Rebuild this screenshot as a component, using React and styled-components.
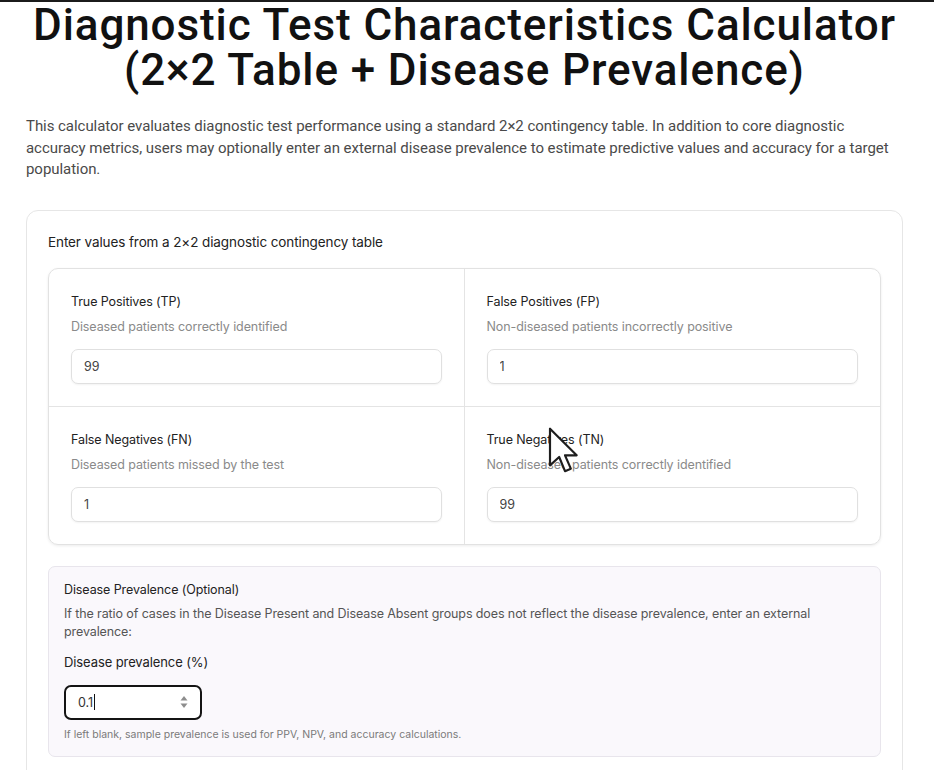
import React from "react";
import styled, { createGlobalStyle } from "styled-components";

const GlobalStyle = createGlobalStyle`
  html, body {
    margin: 0;
    padding: 0;
    background: #ffffff;
  }
  body {
    font-family: Inter, "Noto Sans", sans-serif;
    color: #222;
  }
  * {
    box-sizing: border-box;
  }
`;

const Page = styled.div`
  position: relative;
  width: 934px;
  height: 770px;
  overflow: hidden;
  padding: 0 31px 0 26px;
  border-top: 2px solid #1b1b1b;
`;

const Title = styled.h1`
  margin: 1px -20px 0;
  font-family: Roboto, "Liberation Sans", sans-serif;
  font-weight: 500;
  font-size: 44px;
  line-height: 45px;
  letter-spacing: 0.9px;
  white-space: nowrap;
  text-align: center;
  color: #111;
`;

const Intro = styled.p`
  margin: 23px 0 0;
  font-family: Roboto, "Liberation Sans", sans-serif;
  font-size: 15px;
  line-height: 21.5px;
  letter-spacing: -0.05px;
  color: #4a4a4a;
`;

const Card = styled.section`
  margin-top: 29px;
  border: 1px solid #e6e6e6;
  border-radius: 12px;
  padding: 22px 21px 30px;
  background: #fff;
`;

const CardHeading = styled.div`
  font-size: 13.5px;
  line-height: 18px;
  letter-spacing: -0.1px;
  color: #222;
  margin-bottom: 17px;
`;

const TableGrid = styled.div`
  display: grid;
  grid-template-columns: 1fr 1fr;
  border: 1px solid #e2e2e2;
  border-radius: 10px;
  overflow: hidden;
  box-shadow: 0 1px 3px rgba(0, 0, 0, 0.08);
`;

const Cell = styled.div`
  padding: 24px 22px 22px;
  border-right: ${(p) => (p.$left ? "1px solid #e4e4e4" : "none")};
  border-bottom: ${(p) => (p.$top ? "1px solid #e4e4e4" : "none")};
`;

const Label = styled.div`
  font-size: 12.5px;
  line-height: 18px;
  letter-spacing: -0.1px;
  color: #222;
`;

const Hint = styled.div`
  margin-top: 7px;
  font-size: 12.5px;
  line-height: 18px;
  letter-spacing: -0.1px;
  color: #8a8a8a;
`;

const Field = styled.input`
  display: block;
  width: 100%;
  height: 35px;
  margin-top: 13px;
  padding: 0 12px;
  border: 1px solid #e0e0e0;
  border-radius: 7px;
  box-shadow: 0 1px 2px rgba(0, 0, 0, 0.05);
  font-family: Inter, sans-serif;
  font-size: 12.5px;
  color: #444;
  background: #fff;
  outline: none;
`;

const PrevalenceBox = styled.div`
  margin-top: 21px;
  background: #faf8fc;
  border: 1px solid #e8e5ec;
  border-radius: 7px;
  padding: 14px 15px 14px;
`;

const BoxTitle = styled.div`
  font-size: 12.5px;
  line-height: 18px;
  letter-spacing: -0.1px;
  color: #222;
`;

const BoxText = styled.p`
  margin: 6px 0 0;
  font-size: 12.5px;
  line-height: 18px;
  letter-spacing: -0.1px;
  color: #555;
`;

const FieldLabel = styled.div`
  margin-top: 12px;
  font-size: 13px;
  line-height: 18px;
  letter-spacing: -0.1px;
  color: #222;
`;

const NumberField = styled.div`
  position: relative;
  display: flex;
  align-items: center;
  width: 138px;
  height: 35px;
  margin-top: 14px;
  padding: 0 12px;
  border: 2px solid #141414;
  border-radius: 7px;
  background: #fff;
  font-size: 12.5px;
  color: #333;
`;

const Caret = styled.span`
  display: inline-block;
  width: 1px;
  height: 16px;
  margin-left: 1px;
  background: #111;
`;

const Spinner = styled.svg`
  position: absolute;
  right: 12px;
  top: 50%;
  transform: translateY(-50%);
`;

const Small = styled.div`
  margin-top: 8px;
  font-size: 10.5px;
  line-height: 14px;
  color: #7a7a7a;
`;

const Pointer = styled.svg`
  position: absolute;
  left: 548px;
  top: 425px;
  pointer-events: none;
`;

const cells = [
  { label: "True Positives (TP)", hint: "Diseased patients correctly identified", value: "99" },
  { label: "False Positives (FP)", hint: "Non-diseased patients incorrectly positive", value: "1" },
  { label: "False Negatives (FN)", hint: "Diseased patients missed by the test", value: "1" },
  { label: "True Negatives (TN)", hint: "Non-diseased patients correctly identified", value: "99" },
];

export default function App() {
  return (
    <Page>
      <GlobalStyle />
      <Title>
        Diagnostic Test Characteristics Calculator
        <br />
        (2×2 Table + Disease Prevalence)
      </Title>
      <Intro>
        This calculator evaluates diagnostic test performance using a standard 2×2 contingency table. In addition to
        core diagnostic accuracy metrics, users may optionally enter an external disease prevalence to estimate
        predictive values and accuracy for a target population.
      </Intro>

      <Card>
        <CardHeading>Enter values from a 2×2 diagnostic contingency table</CardHeading>
        <TableGrid>
          {cells.map((c, i) => (
            <Cell key={c.label} $left={i % 2 === 0} $top={i < 2}>
              <Label>{c.label}</Label>
              <Hint>{c.hint}</Hint>
              <Field type="text" defaultValue={c.value} />
            </Cell>
          ))}
        </TableGrid>

        <PrevalenceBox>
          <BoxTitle>Disease Prevalence (Optional)</BoxTitle>
          <BoxText>
            If the ratio of cases in the Disease Present and Disease Absent groups does not reflect the disease
            prevalence, enter an external prevalence:
          </BoxText>
          <FieldLabel>Disease prevalence (%)</FieldLabel>
          <NumberField>
            0.1
            <Caret />
            <Spinner width="8" height="14" viewBox="0 0 8 14">
              <path d="M4 1 L7.5 5.5 H0.5 Z" fill="#8d8d8d" />
              <path d="M4 13 L7.5 8.5 H0.5 Z" fill="#8d8d8d" />
            </Spinner>
          </NumberField>
          <Small>If left blank, sample prevalence is used for PPV, NPV, and accuracy calculations.</Small>
        </PrevalenceBox>
      </Card>

      {/* mouse pointer captured in the screenshot */}
      <Pointer width="34" height="50" viewBox="0 0 20 30">
        <path
          d="M1 1 L1 23 L6.5 18 L10 26.5 L13.5 25 L10 17 L17 17 Z"
          fill="#fff"
          stroke="#1e1e1e"
          strokeWidth="1.3"
          strokeLinejoin="round"
        />
      </Pointer>
    </Page>
  );
}
